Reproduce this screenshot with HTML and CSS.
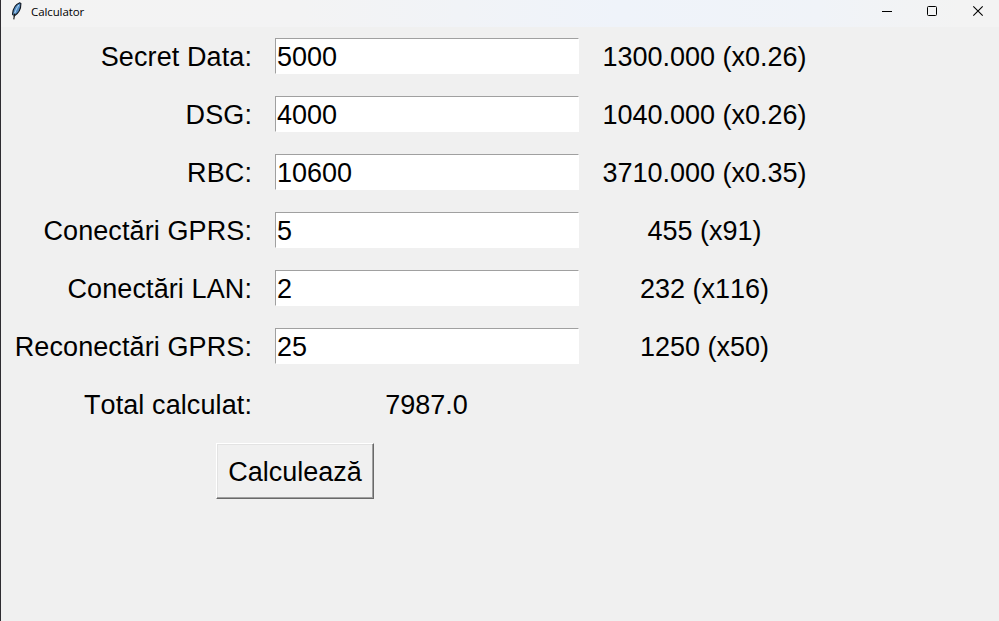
FILE: index.html
```html
<!DOCTYPE html>
<html lang="ro">
<head>
<meta charset="utf-8">
<title>Calculator</title>
<link rel="stylesheet" href="styles.css">
</head>
<body>
<div class="window">
  <header class="titlebar">
    <svg class="feather" width="12" height="18" viewBox="0 0 12 18">
      <path d="M8.8 .8C5 2.2 2 6 1.5 12.2L3.2 14C7.5 11.5 10 7 9.9 1.6Z" fill="#528bc3" stroke="#10161f" stroke-width="1.1"/>
      <path d="M7.8 3C5.5 6.5 3.8 10 2.9 14" fill="none" stroke="#b9dcf5" stroke-width="1"/>
      <path d="M3.6 11.5L2.8 17.3" stroke="#111" stroke-width="1.1"/>
    </svg>
    <span class="title">Calculator</span>
    <div class="controls">
      <svg width="46" height="22" viewBox="0 0 46 22"><path d="M22 11.5h10" stroke="#000"/></svg>
      <svg width="46" height="22" viewBox="0 0 46 22"><rect x="21.5" y="6.5" width="9" height="9" rx="1" fill="none" stroke="#000"/></svg>
      <svg width="46" height="22" viewBox="0 0 46 22"><path d="M21.3 6.3l9.4 9.4M30.7 6.3l-9.4 9.4" stroke="#000" stroke-width="1.1"/></svg>
    </div>
  </header>
  <main class="form">
    <label class="label" for="f1">Secret Data:</label><input class="entry" id="f1" value="5000"><span class="result">1300.000 (x0.26)</span>
    <label class="label" for="f2">DSG:</label><input class="entry" id="f2" value="4000"><span class="result">1040.000 (x0.26)</span>
    <label class="label" for="f3">RBC:</label><input class="entry" id="f3" value="10600"><span class="result">3710.000 (x0.35)</span>
    <label class="label" for="f4">Conectări GPRS:</label><input class="entry" id="f4" value="5"><span class="result">455 (x91)</span>
    <label class="label" for="f5">Conectări LAN:</label><input class="entry" id="f5" value="2"><span class="result">232 (x116)</span>
    <label class="label" for="f6">Reconectări GPRS:</label><input class="entry" id="f6" value="25"><span class="result">1250 (x50)</span>
    <span class="label">Total calculat:</span><span class="total">7987.0</span>
    <div class="actions"><button class="calc" type="button">Calculează</button></div>
  </main>
</div>
</body>
</html>
```

FILE: styles.css
```css
* { box-sizing: border-box; }
body { margin: 0; background: #f0f0f0; }
.window {
  height: 621px;
  border-left: 1px solid #2e2c31;
  background: #f0f0f0;
  color: #000;
  overflow: hidden;
}
.titlebar {
  display: flex;
  height: 27px;
  padding-left: 10px;
  background: linear-gradient(90deg, #f3f3f3 0%, #f3f3f4 30%, #eff3fa 62%, #f0f3f8 82%, #f3f3f3 96%);
}
.feather { margin-top: 2px; }
.title {
  margin-left: 8px;
  font: 11.5px/24px "Open Sans", "Noto Sans", sans-serif;
  letter-spacing: -0.1px;
}
.controls { display: flex; margin-left: auto; padding-right: 1px; margin-right: 0; }
.controls svg { display: block; }
.form {
  display: grid;
  grid-template-columns: 252px 304px 204px;
  grid-template-rows: repeat(7, 36px) 56px;
  column-gap: 22px;
  row-gap: 22px;
  padding-top: 11px;
  font: 27px/36px "Liberation Sans", Arial, sans-serif;
  font-kerning: none;
  white-space: nowrap;
}
.label {
  padding: 1px 1px 0 0;
  text-align: right;
  letter-spacing: 0.1px;
}
.entry {
  width: 304px;
  height: 36px;
  padding: 2px 1px 0;
  border: 1px solid;
  border-color: #a0a0a0 #fff #fff #a0a0a0;
  border-radius: 0;
  background: #fff;
  color: #000;
  font: inherit;
  line-height: 32px;
  outline: none;
}
.result { padding-top: 1px; margin: 0 -2px 0 1px; text-align: center; }
.total { grid-column: 2 / 4; width: 304px; padding: 1px 1px 0 0; text-align: center; }
.actions {
  grid-column: 1 / 3;
  grid-row: 8;
  margin-top: -1px;
  display: flex;
  padding-left: 215px;
}
.calc {
  width: 158px;
  height: 56px;
  padding: 2px 0 0;
  border: 1px solid;
  border-color: #fff #696969 #696969 #fff;
  border-radius: 0;
  background: #f0f0f0;
  box-shadow: inset -1px -1px #a0a0a0, inset 1px 1px #e3e3e3;
  color: #000;
  font: inherit;
}
```
